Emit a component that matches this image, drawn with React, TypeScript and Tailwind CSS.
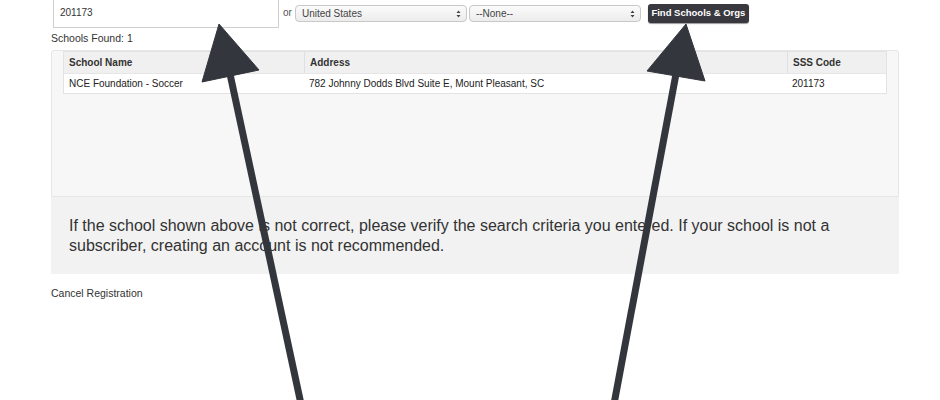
const Arrows = () => (
  <svg className="pointer-events-none absolute left-0 top-0" width="940" height="400" viewBox="0 0 940 400">
    <g fill="#33373d" stroke="#33373d">
      <line x1="230" y1="74" x2="301" y2="404" strokeWidth="7" />
      <polygon points="219,24 202,82 259,70" strokeWidth="1" strokeLinejoin="round" />
      <line x1="676" y1="74" x2="614" y2="404" strokeWidth="7" />
      <polygon points="686,24 647,71 705,81" strokeWidth="1" strokeLinejoin="round" />
    </g>
  </svg>
);

const Select = ({ label }: { label: string }) => (
  <div className="flex h-[17px] w-[172px] items-center justify-between rounded-[4px] border border-[#c8c8c8] bg-gradient-to-b from-[#fbfbfb] to-[#ececec] pl-[6px] pr-[5px] text-[10px] text-[#444]">
    <span>{label}</span>
    <span className="flex flex-col items-center leading-none text-[#444]">
      <svg width="5" height="8" viewBox="0 0 5 8">
        <path d="M0.5 3 L2.5 0.5 L4.5 3 Z M0.5 5 L2.5 7.5 L4.5 5 Z" fill="#444" />
      </svg>
    </span>
  </div>
);

const App = () => {
  return (
    <main className="relative h-[400px] w-[940px] overflow-hidden bg-white font-['Liberation_Sans',Arial,sans-serif] text-[#222]">
      <div className="pl-[51px]">
        <div className="flex items-start">
          <div className="ml-[2px] -mt-[4px] flex h-[32px] w-[226px] items-end border border-[#cfcfcf] bg-white pb-[7px] pl-[6px] text-[10px] text-[#333]">
            201173
          </div>
          <span className="ml-[4px] mt-[6px] text-[10px] leading-[14px] text-[#555]">or</span>
          <div className="ml-[3px] mt-[5px] flex gap-[2px]">
            <Select label="United States" />
            <Select label="--None--" />
          </div>
          <button className="ml-[7px] mt-[4px] flex h-[19px] w-[101px] items-center justify-center rounded-[3px] bg-[#38383e] text-[9.5px] font-bold text-white shadow-[0_1px_1px_rgba(0,0,0,0.4)]">
            Find Schools &amp; Orgs
          </button>
        </div>
        <p className="mt-[3px] text-[10.5px] leading-[14px] text-[#333]">Schools Found: 1</p>

        <div className="mt-[5px] w-[848px]">
          <div className="h-[147px] rounded-t-[3px] border border-[#e6e6e6] bg-[#f7f7f7] px-[11px]">
            <div className="w-[824px] border border-[#e3e3e3] bg-white text-[10px]">
              <div className="grid h-[21px] grid-cols-[240px_483px_1fr] items-center bg-[#f0f0f0] font-bold text-[#333]">
                <div className="pl-[5px]">School Name</div>
                <div className="h-full border-l border-[#e0e0e0] pl-[5px] leading-[21px]">Address</div>
                <div className="h-full border-l border-[#e0e0e0] pl-[5px] leading-[21px]">SSS Code</div>
              </div>
              <div className="grid h-[20px] grid-cols-[240px_483px_1fr] items-center border-t border-[#e6e6e6]">
                <div className="pl-[5px]">NCE Foundation - Soccer</div>
                <div className="pl-[5px]">782 Johnny Dodds Blvd Suite E, Mount Pleasant, SC</div>
                <div className="pl-[5px]">201173</div>
              </div>
            </div>
          </div>
          <div className="bg-[#f2f2f2] pb-[18px] pl-[18px] pr-[18px] pt-[19px] text-[16px] leading-[20px] text-[#333]">
            If the school shown above is not correct, please verify the search criteria you entered. If your school is not a subscriber, creating an account is not recommended.
          </div>
        </div>

        <p className="mt-[12px] text-[10.5px] leading-[14px] text-[#333]">Cancel Registration</p>
      </div>
      <Arrows />
    </main>
  );
};

export default App;
